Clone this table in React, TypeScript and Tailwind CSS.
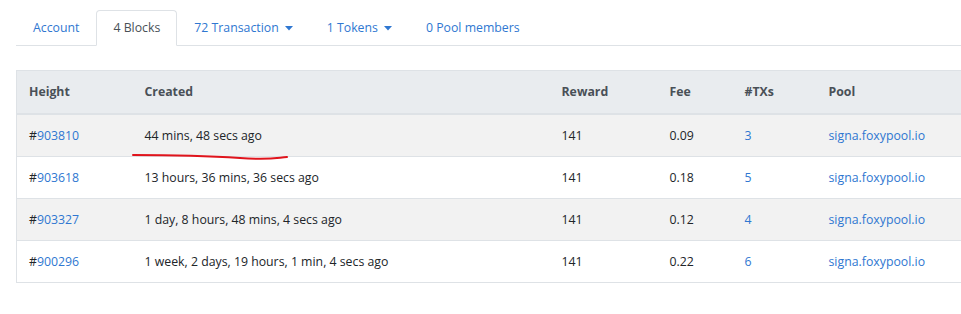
const tabs = [
  { label: 'Account' },
  { label: '4 Blocks', active: true },
  { label: '72 Transaction', caret: true },
  { label: '1 Tokens', caret: true },
  { label: '0 Pool members' },
]

const blocks = [
  { height: '903810', created: '44 mins, 48 secs ago', reward: '141', fee: '0.09', txs: '3' },
  { height: '903618', created: '13 hours, 36 mins, 36 secs ago', reward: '141', fee: '0.18', txs: '5' },
  { height: '903327', created: '1 day, 8 hours, 48 mins, 4 secs ago', reward: '141', fee: '0.12', txs: '4' },
  { height: '900296', created: '1 week, 2 days, 19 hours, 1 min, 4 secs ago', reward: '141', fee: '0.22', txs: '6' },
]

export default function App() {
  return (
    <div
      className="relative w-[961px] h-[314px] overflow-hidden bg-white text-[12.3px] leading-[18px] text-[#212529]"
      style={{ fontFamily: '"Open Sans", "Noto Sans", sans-serif' }}
    >
      <div className="pl-4 pt-[10px]">
        <ul className="flex border-b border-[#dee2e6]">
          {tabs.map((t) => (
            <li key={t.label} className="-mb-px">
              <span
                className={
                  t.active
                    ? 'flex items-center px-4 py-2 border border-[#dee2e6] border-b-white rounded-t bg-white text-[#495057]'
                    : 'flex items-center px-4 py-2 border border-transparent text-[#2f77d1]'
                }
              >
                {t.label}
                {t.caret && (
                  <svg width="8" height="5" viewBox="0 0 8 5" className="ml-[6px]">
                    <path d="M0 0h8L4 4.5z" fill="#2f77d1" />
                  </svg>
                )}
              </span>
            </li>
          ))}
        </ul>
      </div>

      <div className="pl-4 pt-6">
        <table className="w-[1020px] table-fixed border-collapse border border-[#dee2e6]">
          <colgroup>
            <col className="w-[116px]" />
            <col className="w-[417px]" />
            <col className="w-[108px]" />
            <col className="w-[75px]" />
            <col className="w-[84px]" />
            <col />
          </colgroup>
          <thead>
            <tr className="bg-[#e9ecef] text-[#495057] font-bold text-left">
              <th className="px-3 py-3 border-b-2 border-[#dee2e6]">Height</th>
              <th className="px-3 py-3 border-b-2 border-[#dee2e6]">Created</th>
              <th className="px-3 py-3 border-b-2 border-[#dee2e6]">Reward</th>
              <th className="px-3 py-3 border-b-2 border-[#dee2e6]">Fee</th>
              <th className="px-3 py-3 border-b-2 border-[#dee2e6]">#TXs</th>
              <th className="px-3 py-3 border-b-2 border-[#dee2e6]">Pool</th>
            </tr>
          </thead>
          <tbody>
            {blocks.map((b, i) => (
              <tr key={b.height} className={i % 2 === 0 ? 'bg-[#f2f2f2]' : 'bg-white'}>
                <td className="px-3 py-[11px] leading-[19px] border-t border-[#dee2e6]">
                  #<span className="text-[#2f77d1]">{b.height}</span>
                </td>
                <td className="px-3 py-[11px] leading-[19px] border-t border-[#dee2e6]">{b.created}</td>
                <td className="px-3 py-[11px] leading-[19px] border-t border-[#dee2e6]">{b.reward}</td>
                <td className="px-3 py-[11px] leading-[19px] border-t border-[#dee2e6]">{b.fee}</td>
                <td className="px-3 py-[11px] leading-[19px] border-t border-[#dee2e6] text-[#2f77d1]">{b.txs}</td>
                <td className="px-3 py-[11px] leading-[19px] border-t border-[#dee2e6] text-[#2f77d1]">signa.foxypool.io</td>
              </tr>
            ))}
          </tbody>
        </table>
      </div>

      <svg className="absolute left-[130px] top-[151px]" width="160" height="10" viewBox="0 0 160 10">
        <path d="M3 4 C 40 4, 80 5, 110 7 S 145 7, 157 6" stroke="#e0141c" strokeWidth="2" fill="none" strokeLinecap="round" />
      </svg>
    </div>
  )
}
